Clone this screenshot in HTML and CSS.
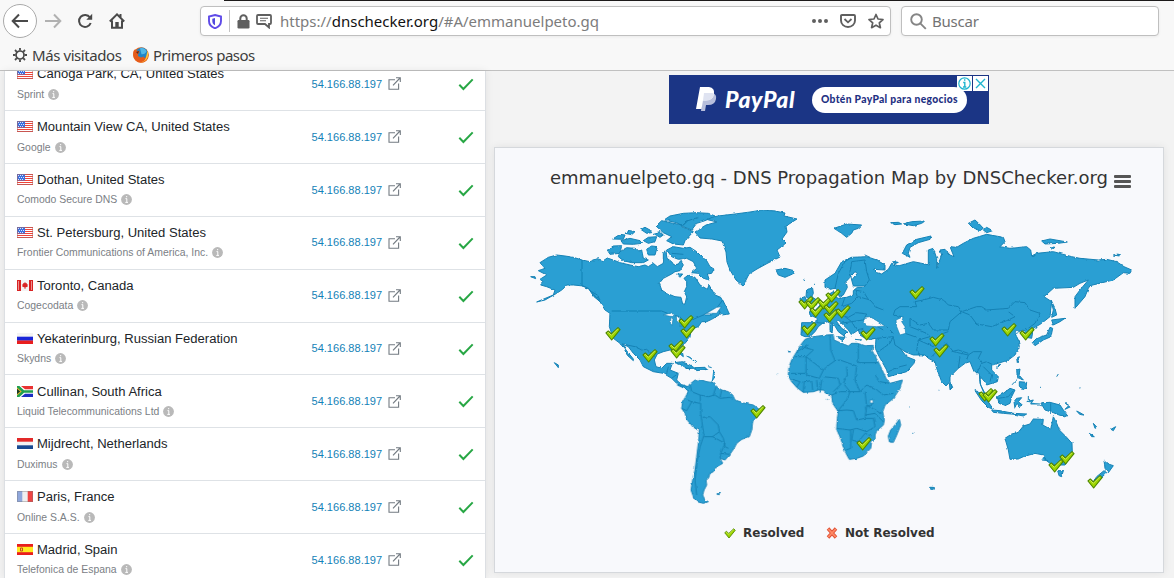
FILE: index.html
```html
<!DOCTYPE html>
<html lang="es">
<head>
<meta charset="utf-8">
<title>DNS Checker</title>
<link rel="stylesheet" href="styles.css">
</head>
<body>
<svg class="defs" width="0" height="0" aria-hidden="true">
  <defs>
    <symbol id="info" viewBox="0 0 11 11"><circle cx="5.5" cy="5.5" r="5.4" fill="#b9b9b9"/><path d="M4.5 4.600h1.300v3.600M4.300 8.400h2.700M5 2.700h1.200" fill="none" stroke="#fff" stroke-width="1"/></symbol>
    <symbol id="ext" viewBox="0 0 13 13"><path d="M7 2.8H1v9.400h9.600V6.500M5 8.400 12 1M8 .7h4.300V5" fill="none" stroke="#737b82" stroke-width="1.1"/></symbol>
    <symbol id="ok" viewBox="0 0 16 13"><path d="M1.300 6.800 5.400 11 14.700 1.400" fill="none" stroke="#28a745" stroke-width="2"/></symbol>
    <symbol id="us" viewBox="0 0 16 11"><path fill="#fff" d="M0 0h16v11H0z"/><path stroke="#f04438" stroke-width="1" d="M0 .5h16M7 2.500h9M7 4.500h9M0 6.500h16M0 8.500h16M0 10.500h16"/><path fill="#3d70dd" d="M0 0h8v6.500H0z"/><path stroke="#d5e2ff" stroke-dasharray="1 1" d="M1 1.500h6M2 3.500h5M1 5.500h6"/><path fill="none" stroke="#a66" stroke-opacity=".55" d="M.5.5h15v10H.5z"/></symbol>
    <symbol id="ca" viewBox="0 0 16 11"><path fill="#f4f4f4" d="M0 0h16v11H0z"/><path fill="#d92323" d="M0 0h4v11H0zM12 0h4v11h-4zM8 2l1 1.400 1-.3-.1 1.400 1.400-.1-.9 1.400.5.7-2.500.9V9h-.8V7.400l-2.500-.9.5-.7-.9-1.400 1.400.1L6 3.100l1 .3z"/><path stroke="#fff" stroke-opacity=".5" d="M1.500 1v9M14.500 1v9"/></symbol>
    <symbol id="ru" viewBox="0 0 16 11"><path fill="#f3f3f3" d="M0 0h16v4H0z"/><path fill="#1a25d8" d="M0 3.700h16v4H0z"/><path fill="#e91e1e" d="M0 7.500h16V11H0z"/></symbol>
    <symbol id="za" viewBox="0 0 16 11"><path fill="#e93232" d="M0 0h16v5H0z"/><path fill="#1c2ec4" d="M0 6h16v5H0z"/><path fill="#fff" d="M1 0h3l4 3.300h8v4.400H8L4 11H1z"/><path fill="#20a050" d="M0 0h2.400l4.600 4.200h9v2.600H7L2.400 11H0z"/><path fill="#f0b52c" d="M0 1.500 4.700 5.500 0 9.500z"/><path fill="#173d25" d="M0 2.800 3.200 5.500 0 8.200z"/></symbol>
    <symbol id="nl" viewBox="0 0 16 11"><path fill="#f3f3f3" d="M0 0h16v11H0z"/><path fill="#e22929" d="M0 0h16v3.700H0z"/><path fill="#174a92" d="M0 7.300h16V11H0z"/></symbol>
    <symbol id="fr" viewBox="0 0 16 11"><path fill="#f0f0f0" d="M0 0h16v11H0z"/><path fill="#8fa7dc" d="M0 0h5.300v11H0z"/><path fill="#ee4443" d="M10.700 0H16v11h-5.300z"/><path fill="none" stroke="#777" stroke-opacity=".4" d="M.5.5h15v10H.5z"/></symbol>
    <symbol id="es" viewBox="0 0 16 11"><path fill="#e91e1e" d="M0 0h16v11H0z"/><path fill="#ffea20" d="M0 2.800h16v5.400H0z"/><path fill="none" stroke="#c34b20" d="M3.500 4h2v3h-2z"/></symbol>
    <symbol id="tick" width="16" height="14" viewBox="-24 -21 48 42"><path d="M-21-3-14-9-5 0 15-19 21-13-4 18z" fill="#9ed600" stroke="#4f8700" stroke-width="3.500" stroke-linejoin="round"/><path d="m-17-3 3-2 9 9 20-20" fill="none" stroke="#d8f26a" stroke-width="2.500"/></symbol>
    <filter id="coast" x="0" y="0" width="1" height="1"><feTurbulence type="fractalNoise" baseFrequency=".22" numOctaves="2" seed="4"/><feDisplacementMap in="SourceGraphic" scale="2.500" xChannelSelector="R" yChannelSelector="G"/></filter>
  </defs>
</svg>

<header class="chrome">
  <div class="tabline"></div>
  <nav class="toolbar">
    <span class="back"><svg width="18" height="16" viewBox="0 0 18 16"><path d="M17 8H2M8 1.500 1.700 8 8 14.500" class="line"/></svg></span>
    <svg class="fwd" width="17" height="16" viewBox="0 0 17 16"><path d="M0 8h15M9 1.500 15.300 8 9 14.500" class="line"/></svg>
    <svg class="reload" width="16" height="16" viewBox="0 0 16 16"><path d="M13 4.500A6 6 0 1 0 13.700 10" class="line"/><path d="M15.200.8v6H9.300z" fill="#4a4a4a"/></svg>
    <svg class="home" width="16" height="16" viewBox="0 0 16 16"><path d="M.8 8.500 8 1.400l7.200 7.100M3 7.500v7.300h10V7.500M11.500 1v4" class="line"/><path d="M6.300 14V9h3.400v5z" fill="#4a4a4a"/></svg>
    <div class="urlbar">
      <svg class="shield" width="14" height="15" viewBox="0 0 14 15"><path d="M7 1 13 2.500V7c0 4-2.500 6-6 7.300C3.500 13 1 11 1 7V2.500z" fill="#fff" stroke="#5f4be8" stroke-width="1.900"/><path d="M7 4 4.300 4.700V7c0 2 .7 3.300 2.700 4.300z" fill="#5149dd"/></svg>
      <i class="sep"></i>
      <svg class="lock" width="13" height="15" viewBox="0 0 13 15"><path d="M3.300 7V4.500a3.200 3.200 0 0 1 6.400 0V7" fill="none" stroke="#5f5f5f" stroke-width="2"/><rect x=".5" y="6" width="12" height="8.500" rx="1.200" fill="#5f5f5f"/></svg>
      <svg class="bubble" width="16" height="15" viewBox="0 0 16 15"><path d="M2 1h12q1 0 1 1v7q0 1-1 1h-1v3.500L9 10H2Q1 10 1 9V2q0-1 1-1z" fill="#fff" stroke="#5f5f5f" stroke-width="1.800"/><path d="M4 4.200h8M4 6.800h6" stroke="#5f5f5f" stroke-width="1.100"/></svg>
      <span class="url">https://<b>dnschecker.org</b>/#A/emmanuelpeto.gq</span>
      <svg class="dots" width="16" height="4" viewBox="0 0 16 4"><path d="M2 2h0M8 2h0M14 2h0" stroke="#5f5f5f" stroke-width="4" stroke-linecap="round"/></svg>
      <svg class="pocket" width="16" height="14" viewBox="0 0 16 14"><path d="M2 1h12q1 0 1 1v4.500a7 6.500 0 0 1-14 0V2q0-1 1-1z" fill="none" stroke="#5f5f5f" stroke-width="1.900"/><path d="M4.500 5 8 8.300 11.500 5" fill="none" stroke="#5f5f5f" stroke-width="1.800"/></svg>
      <svg class="star" width="16" height="16" viewBox="0 0 16 16"><path d="M8 1.500 10 6l5 .5-3.700 3.300 1.100 4.900L8 12.200l-4.400 2.500 1.100-4.900L1 6.500 6 6z" fill="none" stroke="#5f5f5f" stroke-width="1.700" stroke-linejoin="round"/></svg>
    </div>
    <div class="search">
      <svg width="17" height="17" viewBox="0 0 17 17"><circle cx="6.500" cy="6.500" r="5.300" fill="none" stroke="#858585" stroke-width="1.900"/><path d="m10.300 10.300 5.500 5.500" stroke="#858585" stroke-width="1.900"/></svg>
      <span>Buscar</span>
    </div>
  </nav>
  <div class="bookmarks">
    <svg class="gear" width="14" height="14" viewBox="0 0 14 14"><circle cx="7" cy="7" r="4" fill="none" stroke="#4a4a4a" stroke-width="1.700"/><path d="M7 0v2.500M7 11.500V14M0 7h2.500M11.500 7H14M2 2l1.800 1.800M10.200 10.200 12 12M2 12l1.800-1.800M10.200 3.800 12 2" stroke="#4a4a4a" stroke-width="1.800"/></svg>
    <span class="mas">Más visitados</span>
    <svg class="fox" width="16" height="16" viewBox="0 0 16 16"><circle cx="8" cy="8" r="7.800" fill="#e8671b"/><circle cx="8.800" cy="6.300" r="5.900" fill="#2187c8"/><path d="M7 1.200q5-1 6.500 3.500-2 3-5 2.500z" fill="#53b9e8"/><path d="M.5 4 2.200 2l.5 2 3-.3 1 1.200-1.500 2L5 9l3 1.500 3-1c-1 3 2 2 3.800-4C17 13 11 16 7.500 15.600 2 15-1 10 .5 4z" fill="#e65b1b"/><path d="M14.500 4c2 6-1 11-7 11.500 6-2 5-4 7-11.500z" fill="#ffc83a"/><path d="m3 5 3-1-1 3z" fill="#5a2b20"/></svg>
    <span class="pasos">Primeros pasos</span>
  </div>
</header>

<div class="page">
  <section class="results">
    <div class="row"><div class="place"><div class="name"><svg class="flag"><use href="#us"/></svg>Canoga Park, CA, United States</div><div class="isp">Sprint<svg class="info"><use href="#info"/></svg></div></div><div class="ip">54.166.88.197<svg class="ext"><use href="#ext"/></svg></div><svg class="ok"><use href="#ok"/></svg></div>
    <div class="row"><div class="place"><div class="name"><svg class="flag"><use href="#us"/></svg>Mountain View CA, United States</div><div class="isp">Google<svg class="info"><use href="#info"/></svg></div></div><div class="ip">54.166.88.197<svg class="ext"><use href="#ext"/></svg></div><svg class="ok"><use href="#ok"/></svg></div>
    <div class="row"><div class="place"><div class="name"><svg class="flag"><use href="#us"/></svg>Dothan, United States</div><div class="isp">Comodo Secure DNS<svg class="info"><use href="#info"/></svg></div></div><div class="ip">54.166.88.197<svg class="ext"><use href="#ext"/></svg></div><svg class="ok"><use href="#ok"/></svg></div>
    <div class="row"><div class="place"><div class="name"><svg class="flag"><use href="#us"/></svg>St. Petersburg, United States</div><div class="isp">Frontier Communications of America, Inc.<svg class="info"><use href="#info"/></svg></div></div><div class="ip">54.166.88.197<svg class="ext"><use href="#ext"/></svg></div><svg class="ok"><use href="#ok"/></svg></div>
    <div class="row"><div class="place"><div class="name"><svg class="flag"><use href="#ca"/></svg>Toronto, Canada</div><div class="isp">Cogecodata<svg class="info"><use href="#info"/></svg></div></div><div class="ip">54.166.88.197<svg class="ext"><use href="#ext"/></svg></div><svg class="ok"><use href="#ok"/></svg></div>
    <div class="row"><div class="place"><div class="name"><svg class="flag"><use href="#ru"/></svg>Yekaterinburg, Russian Federation</div><div class="isp">Skydns<svg class="info"><use href="#info"/></svg></div></div><div class="ip">54.166.88.197<svg class="ext"><use href="#ext"/></svg></div><svg class="ok"><use href="#ok"/></svg></div>
    <div class="row"><div class="place"><div class="name"><svg class="flag"><use href="#za"/></svg>Cullinan, South Africa</div><div class="isp">Liquid Telecommunications Ltd<svg class="info"><use href="#info"/></svg></div></div><div class="ip">54.166.88.197<svg class="ext"><use href="#ext"/></svg></div><svg class="ok"><use href="#ok"/></svg></div>
    <div class="row"><div class="place"><div class="name"><svg class="flag"><use href="#nl"/></svg>Mijdrecht, Netherlands</div><div class="isp">Duximus<svg class="info"><use href="#info"/></svg></div></div><div class="ip">54.166.88.197<svg class="ext"><use href="#ext"/></svg></div><svg class="ok"><use href="#ok"/></svg></div>
    <div class="row"><div class="place"><div class="name"><svg class="flag"><use href="#fr"/></svg>Paris, France</div><div class="isp">Online S.A.S.<svg class="info"><use href="#info"/></svg></div></div><div class="ip">54.166.88.197<svg class="ext"><use href="#ext"/></svg></div><svg class="ok"><use href="#ok"/></svg></div>
    <div class="row"><div class="place"><div class="name"><svg class="flag"><use href="#es"/></svg>Madrid, Spain</div><div class="isp">Telefonica de Espana<svg class="info"><use href="#info"/></svg></div></div><div class="ip">54.166.88.197<svg class="ext"><use href="#ext"/></svg></div><svg class="ok"><use href="#ok"/></svg></div>
  </section>

  <main class="main">
    <div class="ad">
      <svg class="pp" width="21" height="25" viewBox="0 0 21 25"><path d="M7 6h9q5 1 4 6-1 6-8 6h-2l-1 6H5z" fill="#b7bedb"/><path d="M4 0h9q6 1 5 7-1 6-8 6.500H7L5.500 22H0z" fill="#fff"/><path d="M8 6h8.500q2 .5 1.500 2-2 5.500-8 5.500H7z" fill="#dfe3f1"/></svg>
      <span class="brand">PayPal</span>
      <span class="cta">Obtén PayPal para negocios</span>
      <div class="adchoices">
        <svg width="15" height="15" viewBox="0 0 15 15"><path fill="#fff" d="M0 0h15v15H0z"/><circle cx="7.500" cy="7.500" r="5.700" fill="none" stroke="#20b5cf" stroke-width="1.200"/><path d="M6.200 6.500h1.600v4M6 11h3.300M7 4h1.400" fill="none" stroke="#20b5cf" stroke-width="1.400"/></svg>
        <svg width="15" height="15" viewBox="0 0 15 15"><path fill="#fff" d="M0 0h15v15H0z"/><path d="m3 3 9 9M12 3l-9 9" stroke="#20b5cf" stroke-width="1.400"/></svg>
      </div>
    </div>

    <div class="card">
      <div class="head"><h1>emmanuelpeto.gq - DNS Propagation Map by DNSChecker.org</h1><span class="menu"><i></i><i></i><i></i></span></div>
      <svg class="map" width="630" height="310" viewBox="520 200 630 310">
        <g filter="url(#coast)">
        <path class="land thin" d="M695 232 706 225 717 222 705 219 718 216 735 214 750 212 762 210 775 211 785 213 784 216 797 219 786 226 787 232 782 239 786 243 777 250 780 257 768 263 757 269 749 274 743 286 736 280 730 270 727 262 726 252 722 241 712 239 700 238z"/>
        <g transform="translate(520 200) scale(.33333)">
          <path class="land" d="M60 188 85 172 110 165 135 168 160 172 186 180 210 185 232 176 250 182 262 174 285 182 300 188 330 195 355 200 375 195 385 200 400 190 412 200 430 190 430 160 437 150 441 175 455 185 462 195 475 192 482 182 490 195 480 212 465 215 455 222 430 235 418 250 425 270 440 280 465 290 483 292 488 312 495 312 500 290 493 275 500 260 500 245 492 235 505 225 525 232 540 255 562 268 567 255 585 285 602 292 612 310 605 318 575 330 550 345 575 345 590 325 602 330 597 345 575 358 560 365 545 365 535 380 520 385 512 395 510 412 495 430 485 445 490 470 480 462 475 450 450 450 430 455 412 462 403 480 408 500 425 505 440 490 457 490 450 510 475 520 470 540 485 555 505 560 515 558 505 572 485 560 470 550 455 535 430 520 400 515 370 500 360 480 340 460 325 440 307 432 318 450 340 477 340 482 322 466 312 445 300 430 280 415 268 380 270 340 255 330 240 305 222 290 205 265 190 258 160 255 140 255 128 268 110 280 75 300 50 306 100 285 105 270 80 260 62 255 70 245 60 238 80 225 55 212 75 205z"/>
          <path class="land" d="M262 150 280 138 305 137 300 160 270 163zM300 155 320 143 345 145 355 155 365 150 370 175 385 180 370 188 335 188 310 182 295 170zM278 117 300 103 315 105 310 118zM303 122 330 115 360 122 365 130 340 133 310 132zM315 100 330 92 345 95 335 104zM362 88 375 82 390 90 395 98 380 100zM370 122 385 112 410 110 405 125 385 130zM380 148 395 138 412 140 405 165 385 165zM400 100 420 95 430 105 420 112zM408 78 425 62 450 68 490 75 500 65 485 80 520 95 495 122 490 135 460 132 440 122 455 110 430 98zM432 60 450 48 490 40 530 38 565 40 585 48 555 62 530 70 515 90 490 80 470 68zM440 150 460 140 490 145 510 142 530 155 545 170 560 182 570 200 582 207 575 220 562 222 568 240 550 235 535 220 515 218 530 205 520 185 500 175 475 178 455 170zM470 222 488 222 480 232zM592 322 608 300 618 320 628 342 605 345zM32 230 45 230 47 236zM103 488 115 495 115 503zM465 488 485 485 510 495 525 505 500 505 485 495zM525 503 555 502 560 508 530 512zM497 505 512 506 508 510zM500 468 510 472 528 488M580 510 585 530 575 545M240 300 232 285 215 275M565 500 575 503"/>
          <path class="edge" d="M186 180V258L205 265 240 305M275 333H425L455 345 480 350 490 365 520 358 550 345M307 432 345 440 365 450 380 448 405 470M445 500 440 522M455 535 475 520M455 160 490 163M495 65 535 52"/>
          <path class="water" d="M430 345 455 338 465 350 450 349zM453 352 459 358 456 376 451 370zM469 348 480 352 477 370 470 362zM478 378 503 366 492 378zM560 340 590 322 604 320 590 340z"/>
        </g>
        <g transform="translate(680 340) scale(.33333)">
          <path class="land" d="M-8 135 10 135 22 142 30 132 45 120 52 122 58 118 80 125 100 128 110 140 125 150 145 155 158 165 165 180 195 190 220 195 238 208 235 225 218 245 215 270 208 290 185 298 170 310 162 325 148 345 135 360 120 355 128 370 110 380 100 395 90 400 85 415 78 420 80 435 72 450 68 465 75 480 85 485 70 490 52 485 42 475 33 450 38 420 45 390 50 350 55 310 58 270 40 262 22 240 15 220 5 205 8 185 20 165 25 150z"/>
          <path class="land" d="M375-2 400-10 440-15 460-16 462 0 480 8 505 18 515 10 532 10 555 17 580 16 576 32 597 70 618 115 630 130 667 120 660 145 640 175 615 195 608 215 613 240 610 255 590 272 585 285 585 295 575 305 572 325 550 348 530 355 508 358 498 340 490 320 482 295 470 268 472 235 475 215 458 190 455 165 440 160 430 150 415 150 400 155 370 157 350 142 335 125 325 108 327 80 335 60 350 35 362 15zM658 238 662 255 650 285 640 307 628 305 625 288 632 270 645 255zM110 462 122 458 118 464zM323 33 332 36M291 103h3M441 178h3"/>
          <path class="edge" d="M30 132 35 155 60 165 62 190 62 220 68 262 72 285 60 320 52 360 45 420 50 465M60 165 85 170 105 165 120 175 150 172 158 178M125 150 120 172M108 140 100 165M5 205 20 212 35 185 60 190M22 180 35 185M68 232 90 230 115 255 118 275 98 290 72 290M98 290 135 310 122 340 120 355M118 275 130 295 135 320 145 325M122 340 150 343M378 50V100H335M345 50H378L430 90M385 15 350 35M378 50 400 30 365 20M450-15 452 30 465 62 440 80 430 90 418 115 380 105 378 100M465 62 480 60 530 78M535 12V68H595M500 80 502 105 490 130 510 155 540 155 560 135 585 145 610 165 640 160M530 78 525 120 540 155M430 110 475 115 480 135 460 155M370 157 372 125 395 122 398 150M350 142 360 125 335 118M413 150 410 120M455 165 480 155 510 155 500 180 480 205 475 215M555 155 560 200 555 235 530 240 520 212 500 210 475 212M560 195 605 220M560 200 580 190M555 235 580 235 585 260 560 275 530 265 510 270 470 265M512 268V325L498 330M520 270 515 300 535 305 555 280 575 288M555 225 585 220 610 245M585 105 600 125 630 130M420 155 425 120"/>
          <path class="water" d="M570 180h9v9h-9zM555 200l4 16M583 232l4 14"/>
        </g>
        <g transform="translate(770 200) scale(.33333)">
          <path class="land" d="M93 405 95 368 140 368 142 355 120 345 118 335 140 330 150 318 165 310 180 300 178 282 190 275 195 290 205 295 230 292 250 285 250 272 262 262 282 262 285 258 250 258 245 240 262 220 255 215 240 232 228 245 232 262 220 285 208 290 198 265 180 268 165 262 165 240 195 220 215 185 245 172 290 170 320 180 345 195 345 210 310 208 320 218 335 222 355 208 365 190 385 198 430 185 455 190 475 195 475 150 490 145 500 175 500 205 515 165 510 150 525 148 540 165 552 170 540 140 560 142 580 130 610 115 650 103 700 112 705 125 690 140 720 145 770 140 782 150 785 168 800 160 850 155 905 170 930 175 985 180 1010 178 1040 185 1062 200 1085 210 1080 220 1060 218 1030 240 960 257 955 265 945 290 915 325 915 290 930 270 955 240 930 250 910 262 850 265 822 290 845 305 840 350 815 370 790 385 785 415 770 412 760 390 745 395 735 400 745 420 748 440 735 465 715 480 685 490 665 495 665 510 685 530 682 545 650 555 640 540 630 530 632 555 650 590 642 580 630 550 628 520 612 515 600 485 585 490 565 505 540 530 540 545 528 558 515 545 500 505 495 485 475 475 465 465 430 465 405 455 390 445 410 470 435 480 432 490 410 515 355 530 350 510 325 465 316 445 318 415 290 418 270 405 265 390 250 400 245 405 235 390 220 375 205 360 200 365 215 385 232 395 222 405 225 410 205 395 190 370 175 365 160 368 145 380 135 395 120 410 105 410z"/>
          <path class="land" d="M110 268 128 265 130 280 125 290 140 300 140 315 115 318 120 300 108 290zM90 295 105 290 110 305 92 310zM18 210 45 205 72 212 68 222 45 232 25 225zM192 85 230 72 275 75 265 85 250 90 245 100 230 112 215 100zM362 68 385 67 395 72 375 74zM400 72 425 65 465 63 455 70 430 77zM397 160 410 135 440 118 483 108 480 118 445 128 420 142 415 160 420 172zM595 70 615 60 628 72 640 85 630 92 610 85zM640 90 650 82 668 92 650 98zM815 123 840 117 892 126 865 130 825 132zM840 140 855 142 848 147zM1030 165 1045 162 1048 168zM843 300 855 325 860 345 845 352 850 330zM845 360 885 355 870 365 850 375zM787 428 800 415 830 405 840 382 848 385 843 410 820 420 795 437zM740 475 748 470 742 488zM685 495 692 493 680 505zM541 550 548 562 540 570zM200 410 225 412 218 422zM180 372 188 370 187 395 180 395zM255 418 275 420M300 418 315 415M368 185 385 187 375 191zM285 165 300 172M100 239 105 242M132 253h3M55 456l6-1M22 523h3"/>
          <path class="edge" d="M195 265 205 220 225 185 245 172M245 240 240 215 245 185 285 180 290 215 298 240 285 258M225 292 215 320 245 310 265 290 300 300 320 322 340 330M160 310 185 345 210 345 235 352 260 338 290 342 280 360 245 365 225 350M95 400 105 375M140 368 165 370M262 290 255 270 280 275 295 298M210 370 245 365 260 390 280 385M375 330 390 320 440 320 435 305 460 300 490 292 520 300 535 315 565 320 575 335 620 320 635 320 650 330 715 325 735 305 765 308 780 330 810 340 795 370 775 385M575 335 600 345 620 372 665 380 715 360 735 350 715 335M575 335 540 365 535 390 490 390 475 370 450 375 420 355 420 380 470 400 480 410 445 420 440 450 450 470M375 330 370 345 395 350M320 415 370 410 375 435 390 445M350 380 370 400M405 400 440 412M370 410 360 430 325 455M355 515 390 500 410 495M445 420 490 440 520 400 535 395M485 470 510 445 530 430 550 455 595 465 590 480M595 465 610 455 635 455 625 475 635 490 650 485 670 495M545 455 565 450 595 460M565 505 570 470M635 490 620 520M640 500 665 525 660 545M305 370 340 390M765 385 780 395"/>
          <path class="water" d="M285 352 300 350 320 362 345 378 320 380 290 378 280 368zM378 360 400 350 395 365 405 380 407 400 390 405 380 380zM735 392 748 392 740 402z"/>
        </g>
        <g transform="translate(880 350) scale(.33333)">
          <path class="land" d="M375 265 395 252 415 247 430 228 450 222 460 207 490 208 488 225 512 238 520 200 530 220 538 240 560 262 576 280 577 308 565 330 555 345 530 345 510 340 497 330 490 315 465 310 430 320 415 327 390 328 385 300zM533 362 550 362 545 380 537 377zM672 330 688 343 700 347 685 368 675 355zM672 362 680 368 665 382 640 395 650 380zM285 122 298 126 320 148 340 178 325 172 305 152zM335 180 360 182 400 190 440 192 430 198 405 193 370 190 340 187zM352 140 370 130 390 115 405 120 395 140 390 160 375 167 357 160zM410 145 425 143 415 155 427 165 418 170 412 160 405 175 402 155zM482 158 510 157 540 165 550 180 563 198 540 196 520 188 495 180zM555 158 572 170 555 178 565 168zM410 60 420 57 417 75 430 90 412 82zM418 95 440 97 438 115 425 118 418 108zM415 85 395 105M590 183 600 188 612 195 600 194zM640 220 651 232 645 235zM628 250 643 260 635 260zM693 238 707 230 700 242zM440 155 460 150 452 162 480 162M445 138v16M152 412h8v6h-8zM530 80l5-8M480 112h3M598 114h3M175 121h3M86 171h3M97 250h3M490 320 505 332 485 330M208 100l7 4 1 10-6 2z"/>
          <path class="edge" d="M512 160V192M355 145 385 140 400 122"/>
        </g>
        </g>
        <g class="ticks">
          <use href="#tick" x="605" y="327"/><use href="#tick" x="678" y="315"/><use href="#tick" x="680" y="325"/><use href="#tick" x="668" y="340"/><use href="#tick" x="670" y="345"/><use href="#tick" x="642" y="349"/><use href="#tick" x="750" y="405"/><use href="#tick" x="856" y="437"/>
          <use href="#tick" x="798" y="296"/><use href="#tick" x="805" y="297"/><use href="#tick" x="809" y="304"/><use href="#tick" x="817" y="296"/><use href="#tick" x="825" y="289"/><use href="#tick" x="823" y="309"/><use href="#tick" x="823" y="301"/><use href="#tick" x="835" y="305"/><use href="#tick" x="801" y="322"/><use href="#tick" x="860" y="327"/>
          <use href="#tick" x="909" y="286"/><use href="#tick" x="929" y="333"/><use href="#tick" x="933" y="344"/><use href="#tick" x="1001" y="323"/><use href="#tick" x="1019" y="327"/><use href="#tick" x="978" y="388"/><use href="#tick" x="982" y="389"/><use href="#tick" x="1048" y="459"/><use href="#tick" x="1059" y="451"/><use href="#tick" x="1087" y="475"/>
        </g>
      </svg>
      <div class="legend">
        <svg width="12" height="11"><use href="#tick" width="12" height="11"/></svg><span class="res">Resolved</span>
        <svg width="12" height="12" viewBox="0 0 12 12"><path d="m2 1.500 8 9M10 1.500l-8 9" stroke="#df5136" stroke-width="3.400"/><path d="m2.300 2 7.400 8M9.700 2l-7.400 8" stroke="#ff8a66" stroke-width="1.800"/></svg><span>Not Resolved</span>
      </div>
    </div>
  </main>
</div>
</body>
</html>
```
FILE: styles.css
```css
* { box-sizing: border-box; }
body {
  margin: 0;
  width: 1174px;
  height: 578px;
  overflow: hidden;
  display: flex;
  flex-direction: column;
  background: #f3f3f3;
  font-family: "Liberation Sans", sans-serif;
}
svg { display: block; flex: none; }
.defs { position: absolute; }

.chrome {
  flex: none;
  height: 71px;
  background: #f8f8f8;
  border-bottom: 1px solid #c0c0c0;
  font-family: "Noto Sans", sans-serif;
  color: #3d3d3d;
}
.tabline { height: 1px; margin-left: 224px; background: #1c1a1a; }
.toolbar { display: flex; align-items: center; height: 40px; padding-left: 3px; }
.line { fill: none; stroke: #4a4a4a; stroke-width: 2; }
.back {
  width: 34px; height: 34px;
  display: flex; align-items: center; justify-content: center;
  border: 1px solid #aaa;
  border-radius: 50%;
  background: #fff;
}
.fwd { margin-left: 8px; opacity: .4; }
.reload { margin-left: 15px; }
.home { margin-left: 16px; }
.urlbar, .search {
  height: 30px;
  display: flex;
  align-items: center;
  background: #fff;
  border: 1px solid #bfbfbf;
  border-radius: 4px;
  box-shadow: 0 1px 3px rgba(0, 0, 0, .06);
}
.urlbar { width: 691px; margin-left: 75px; padding-left: 7px; }
.sep { width: 1px; height: 22px; margin: 0 7px; background: #c4c4c4; }
.bubble { margin-left: 6px; }
.url { width: 532px; margin-left: 8px; font-size: 15px; color: #7c7c7c; white-space: nowrap; }
.url b { color: #111; font-weight: 400; }
.pocket { margin-left: 12px; }
.star { margin-left: 12px; }
.search { width: 258px; margin-left: 10px; padding-left: 8px; font-size: 15px; letter-spacing: -.2px; color: #737373; }
.search span { margin-left: 5px; }
.bookmarks { display: flex; align-items: center; height: 28px; padding-left: 13px; font-size: 15px; white-space: nowrap; }
.mas { width: 101px; margin-left: 5px; letter-spacing: -.42px; }
.pasos { margin-left: 4px; letter-spacing: -.5px; }

.page { flex: 1; min-height: 0; display: flex; padding-left: 4px; }
.results {
  width: 482px;
  overflow: hidden;
  background: #fff;
  border: solid #dcdfe3;
  border-width: 0 1px;
  box-shadow: 0 0 8px rgba(0, 0, 0, .08);
}
.row {
  display: flex;
  height: 52.86px;
  padding: 7.600px 0 0 12px;
  border-bottom: 1px solid #dee2e6;
}
.row:first-child { margin-top: -12.7px; }
.place { width: 294.500px; margin-top: -1px; }
.name { display: flex; align-items: center; height: 18px; font-size: 13.050px; color: #212529; white-space: nowrap; }
.flag { width: 16px; height: 11px; margin-right: 4px; }
.isp { display: flex; align-items: center; height: 20px; margin-top: 1.300px; font-size: 10.430px; color: #7b8085; white-space: nowrap; }
.info { width: 11px; height: 11px; margin-left: 4px; }
.ip { width: 146.500px; height: 36px; display: flex; align-items: center; font-size: 11.050px; color: #1382b7; }
.ext { width: 13px; height: 13px; margin-left: 6px; }
.ok { width: 16px; height: 13px; margin-top: 12.400px; }

.main { width: 670px; margin-left: 8px; padding-top: 4px; }
.ad {
  position: relative;
  width: 320px; height: 49px;
  margin-left: 175px;
  padding-left: 27px;
  display: flex;
  align-items: center;
  background: #1b3585;
}
.brand { width: 77px; margin-left: 8px; font: italic 900 23px/1 Lato, sans-serif; letter-spacing: .6px; color: #fff; }
.cta {
  width: 155px; height: 26px;
  margin-left: 10px;
  border-radius: 13px;
  background: #fff;
  color: #1f3183;
  font: 900 10.300px/24px Lato, sans-serif;
  letter-spacing: .32px;
  text-align: center;
  white-space: nowrap;
}
.adchoices { position: absolute; top: 1px; right: 1px; display: flex; gap: 1px; }

.card {
  height: 426px;
  margin-top: 23px;
  padding-top: 16px;
  background: #f8f9fc;
  border: 1px solid #d5d8dc;
  box-shadow: 0 0 8px rgba(0, 0, 0, .08);
}
.head { display: flex; align-items: center; height: 28px; padding-left: 55px; }
.head h1 { margin: 0; width: 564px; font: 400 18px/28px "DejaVu Sans", sans-serif; color: #333; white-space: nowrap; }
.menu { display: flex; flex-direction: column; gap: 2px; padding-top: 7px; }
.menu i { width: 17px; height: 3px; background: #555; border-radius: 1px; }
.map { margin: 8px 0 0 25px; }
.land { fill: #2a9fd3; stroke: #1682b5; stroke-width: 3; stroke-linejoin: round; }
.thin { stroke-width: 1; }
.edge { fill: none; stroke: #1682b5; stroke-width: 3; stroke-linejoin: round; }
.water { fill: #f8f9fc; stroke: #1682b5; stroke-width: 2; }
.legend {
  display: flex;
  align-items: center;
  height: 24px;
  margin-top: 11px;
  padding-left: 229px;
  font: bold 12px/24px "DejaVu Sans", sans-serif;
  color: #333;
}
.legend span { margin-left: 7px; }
.legend .res { width: 83px; }
```
